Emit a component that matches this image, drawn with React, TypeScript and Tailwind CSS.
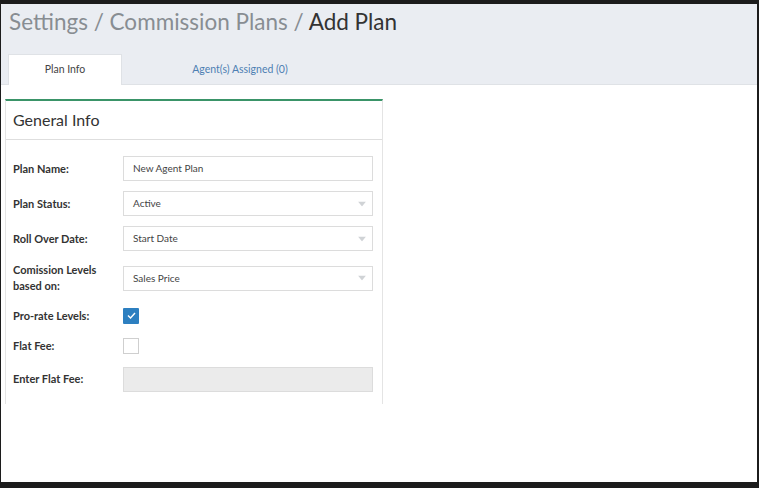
import React from "react";

const font = { fontFamily: 'Lato,"Noto Sans",sans-serif' };

function Caret() {
  return (
    <svg width="8" height="5" viewBox="0 0 8 5" className="absolute right-[6px] top-1/2 -translate-y-1/2">
      <path d="M0 0 L8 0 L4 5 Z" fill="#d0d3d6" />
    </svg>
  );
}

function Row({ label, children, h = "h-[35px]" }: { label: React.ReactNode; children: React.ReactNode; h?: string }) {
  return (
    <div className={`flex items-center ${h}`}>
      <div className="w-[117px] pl-[7px] text-[11px] font-bold leading-[16px] text-[#333]">{label}</div>
      <div className="flex-1">{children}</div>
    </div>
  );
}

function Input({ value, select, disabled }: { value?: string; select?: boolean; disabled?: boolean }) {
  return (
    <div
      className={`relative flex h-[25px] w-[250px] items-center border border-[#dcdcdc] pl-[9px] text-[10px] text-[#444] ${disabled ? "bg-[#ebebeb]" : "bg-white"}`}
    >
      {value}
      {select && <Caret />}
    </div>
  );
}

export default function App() {
  return (
    <div className="h-[488px] w-[759px] bg-[#1c1c1c] pl-[1px] pt-[4px] pr-[2px] pb-[6px]" style={font}>
      <div className="h-full w-full bg-white">
        <div className="h-[81px] border-b border-[#dfe2e6] bg-[#eaedf2]">
          <div className="pl-[8px] pt-[5px] text-[22.5px] leading-[26px] text-[#888d92]">
            Settings / Commission Plans / <span className="text-[#333]">Add Plan</span>
          </div>
          <div className="mt-[19px] flex pl-[7px]">
            <div className="flex h-[31px] w-[114px] items-center justify-center border border-b-0 border-[#dfe2e6] bg-white text-[10.5px] text-[#444]">
              Plan Info
            </div>
            <div className="flex h-[31px] w-[236px] items-center justify-center text-[10.5px] text-[#4d7fb2]">
              Agent(s) Assigned (0)
            </div>
          </div>
        </div>
        <div className="ml-[4px] mt-[14px] h-[305px] w-[378px] overflow-hidden border-x border-[#e4e4e4] border-t-2 border-t-[#3a9468]">
          <div className="flex h-[39px] items-center border-b border-[#dedede] pl-[7px] text-[16px] text-[#333]">General Info</div>
          <div className="pt-[11px]">
            <Row label="Plan Name:">
              <Input value="New Agent Plan" />
            </Row>
            <Row label="Plan Status:">
              <Input value="Active" select />
            </Row>
            <Row label="Roll Over Date:">
              <Input value="Start Date" select />
            </Row>
            <Row label={<>Comission Levels<br />based on:</>} h="h-[44px]">
              <Input value="Sales Price" select />
            </Row>
            <Row label="Pro-rate Levels:" h="h-[31px]">
              <div className="flex h-[16px] w-[16px] items-center justify-center rounded-[1px] bg-[#2d7fc0]">
                <svg width="9" height="7" viewBox="0 0 9 7">
                  <path d="M1 3.5 L3.5 6 L8 1" stroke="white" strokeWidth="1.4" fill="none" />
                </svg>
              </div>
            </Row>
            <Row label="Flat Fee:" h="h-[30px]">
              <div className="h-[16px] w-[16px] border border-[#cfcfcf] bg-white" />
            </Row>
            <Row label="Enter Flat Fee:" h="h-[36px]">
              <Input disabled />
            </Row>
          </div>
        </div>
      </div>
    </div>
  );
}
